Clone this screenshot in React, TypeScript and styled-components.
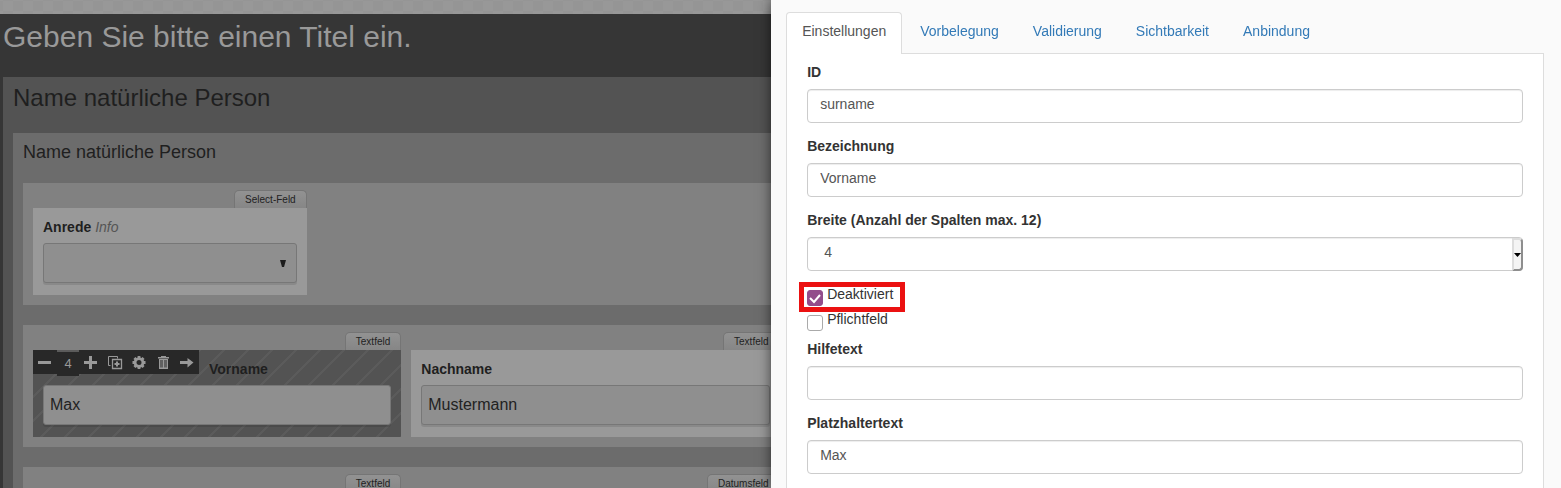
import React from "react";
import styled, { createGlobalStyle } from "styled-components";

const GlobalStyle = createGlobalStyle`
  * { box-sizing: border-box; }
  body { margin: 0; font-family: "Liberation Sans", Arial, sans-serif; font-size: 14px; line-height: 20px; color: #333; }
  button, input, select { font-family: inherit; }
`;

const Shell = styled.div`
  height: 100vh;
  overflow: hidden;
  background: #363636;
`;

const TopStrip = styled.div`
  height: 14px;
  background: repeating-conic-gradient(#959595 0 25%, #989898 0 50%) 3px 1px / 20px 20px;
`;

const TitleBar = styled.header`
  height: 63px;
  padding: 3px;
`;

const Title = styled.h1`
  margin: 0;
  font-size: 30px;
  line-height: 40px;
  font-weight: 400;
  color: #999;
`;

const Form = styled.main`
  width: 75.9%;
  margin-left: 3px;
  padding: 0 10px 10px;
  background: #535353;
`;

const SectionTitle = styled.h2`
  margin: 0;
  padding: 6px 0 20px;
  font-size: 24px;
  line-height: 30px;
  font-weight: 400;
  color: #1f1f1f;
`;

const Group = styled.section`
  padding: 0 10px 10px;
  background: #6c6c6c;
`;

const GroupTitle = styled.h3`
  margin: 0;
  padding: 9px 0 21px;
  font-size: 18px;
  line-height: 20px;
  font-weight: 400;
  color: #1f1f1f;
`;

const Row = styled.div`
  display: grid;
  grid-template-columns: repeat(12, minmax(0, 1fr));
  column-gap: 10px;
  margin-bottom: 20px;
  padding: 7px 10px 10px;
  background: #818181;
`;

const Cell = styled.div<{ $span: number }>`
  grid-column: span ${(p) => p.$span};
  display: flex;
  flex-direction: column;
`;

const TypeTag = styled.span`
  align-self: flex-end;
  height: 18px;
  padding: 0 10px;
  border: 1px solid #757575;
  border-bottom: 0;
  border-radius: 5px 5px 0 0;
  background: linear-gradient(#929292, #868686);
  font-size: 10px;
  line-height: 18px;
  color: #222;
`;

const Card = styled.div<{ $selected?: boolean }>`
  position: relative;
  height: 87px;
  padding: 10px;
  background: ${(p) =>
    p.$selected
      ? "repeating-linear-gradient(135deg, #535353 0 15px, #5b5b5b 15px 17px)"
      : "#999"};
`;

const CardLabel = styled.label<{ $shifted?: boolean }>`
  display: block;
  height: 25px;
  padding-left: ${(p) => (p.$shifted ? "166px" : "0")};
  line-height: 18px;
  font-weight: 700;
  color: #1f1f1f;
`;

const Info = styled.em`
  font-weight: 400;
  color: #555;
`;

const CardInput = styled.input`
  display: block;
  width: 100%;
  height: 40px;
  padding: 0 6px;
  border: 1px solid #777;
  border-radius: 3px;
  background: #8f8f8f;
  box-shadow: 0 2px 0 rgba(0, 0, 0, 0.1);
  font-size: 16px;
  color: #222;
`;

const CardSelectBox = styled.div`
  position: relative;
`;

const CardSelect = styled(CardInput).attrs({ as: "select" })`
  appearance: none;
`;

const Caret = styled.svg`
  position: absolute;
  right: 10px;
  top: 17px;
  pointer-events: none;
`;

const Toolbar = styled.div`
  position: absolute;
  left: 0;
  top: 0;
  display: flex;
  height: 24px;
  background: #282828;
`;

const Tool = styled.button`
  display: flex;
  align-items: center;
  justify-content: center;
  width: 24px;
  height: 24px;
  padding: 0;
  border: 0;
  background: none;
  color: #999;
`;

const Count = styled.span`
  width: 22px;
  height: 26px;
  border-top: 2px solid #5b5b5b;
  background: #282828;
  font-size: 13px;
  line-height: 24px;
  text-align: center;
  color: #999;
`;

const Drawer = styled.aside`
  position: fixed;
  top: 0;
  right: 0;
  bottom: 0;
  width: 50.6%;
  display: flex;
  flex-direction: column;
  padding: 12px 17px 0 15px;
  overflow: hidden;
  background: #fafafa;
  box-shadow: 0 0 12px rgba(0, 0, 0, 0.6);
`;

const Tabs = styled.nav`
  display: flex;
  gap: 2px;
`;

const Tab = styled.a<{ $active?: boolean }>`
  position: relative;
  height: 42px;
  margin-bottom: -1px;
  padding: 8px 15px;
  border: 1px solid ${(p) => (p.$active ? "#ddd" : "transparent")};
  border-bottom: 0;
  border-radius: 4px 4px 0 0;
  background: ${(p) => (p.$active ? "#fff" : "transparent")};
  color: ${(p) => (p.$active ? "#555" : "#337ab7")};
  text-decoration: none;
`;

const Panel = styled.form`
  flex: 1;
  padding: 8px 20px;
  border: 1px solid #ddd;
  border-bottom: 0;
  background: #fff;
`;

const Field = styled.div`
  margin-bottom: 13px;
`;

const FieldLabel = styled.label`
  display: block;
  margin-bottom: 7px;
  font-weight: 700;
`;

const FieldInput = styled.input`
  display: block;
  width: 100%;
  height: 34px;
  padding: 4px 12px 8px;
  border: 1px solid #ccc;
  border-radius: 4px;
  background: #fff;
  box-shadow: inset 0 1px 1px rgba(0, 0, 0, 0.075);
  font-size: 14px;
  line-height: 20px;
  color: #555;
`;

const SelectBox = styled.div`
  position: relative;
`;

const FieldSelect = styled(FieldInput).attrs({ as: "select" })`
  appearance: none;
  padding-left: 16px;
`;

const SelectHandle = styled.span`
  position: absolute;
  top: 1px;
  right: 0;
  bottom: 0;
  display: flex;
  align-items: center;
  width: 11px;
  border: 2px solid #ddd;
  border-right-color: #8e8e8e;
  border-bottom-color: #8e8e8e;
  border-radius: 0 4px 4px 0;
  background: #f4f4f4;
  pointer-events: none;
`;

const Checks = styled.div`
  display: flex;
  flex-direction: column;
  align-items: flex-start;
  gap: 5px;
  margin-bottom: 10px;
`;

const Check = styled.label<{ $marked?: boolean }>`
  position: relative;
  display: flex;
  gap: 4px;
  height: 20px;

  &::after {
    content: ${(p) => (p.$marked ? '""' : "none")};
    position: absolute;
    inset: -2px -12px -8px -8px;
    border: 5px solid #eb1111;
  }
`;

const Tick = styled.input`
  appearance: none;
  width: 16px;
  height: 16px;
  margin: 6px 0 0;
  border: 1px solid #aaa;
  border-radius: 3px;
  background: #fff;

  &:checked {
    border-color: #924d8b;
    background: #924d8b;
  }
`;

const TickMark = styled.svg`
  position: absolute;
  left: 0;
  top: 6px;
  pointer-events: none;
`;

const tools = {
  minus: <path d="M1 7h13v3H1z" />,
  plus: <path d="M6 2h3v5h5v3H9v5H6v-5H1V7h5z" />,
  copy: (
    <>
      <path d="M3.500 11.500h-2v-9h9v2" fill="none" stroke="currentColor" />
      <path d="M5.500 5.500h9v9h-9z" fill="none" stroke="currentColor" strokeWidth="1.300" />
      <path d="M9 7.500h2V9h1.500v2H11v1.500H9V11H7.500V9H9z" />
    </>
  ),
  gear: (
    <>
      <circle cx="8" cy="8.500" r="3.900" fill="none" stroke="currentColor" strokeWidth="2.800" />
      <path
        d="M8 2v2.500M8 12.500V15M1.500 8.500H4M12 8.500h2.500M3.400 3.900l1.700 1.700M10.900 11.400l1.700 1.700M12.600 3.900l-1.700 1.700M5.100 11.400l-1.700 1.700"
        stroke="currentColor"
        strokeWidth="2.800"
      />
    </>
  ),
  trash: (
    <>
      <path d="M6 2h5v1h3v1.500H3V3h3z" />
      <path d="M4 5h9v10H4zM5.500 6v7.500h1V6zM7.500 6v7.500H8V6zM9 6v7.500h.5V6zM10.500 6v7.500h1V6z" fillRule="evenodd" />
    </>
  ),
  arrow: <path d="M1 7h7.500V4L14.500 8.500l-6 5V10H1z" />,
};

function ToolButton({ name, label }: { name: keyof typeof tools; label: string }) {
  return (
    <Tool type="button" aria-label={label}>
      <svg width="16" height="16" viewBox="0 0 16 16" fill="currentColor">
        {tools[name]}
      </svg>
    </Tool>
  );
}

function TextField({ id, label, value }: { id: string; label: string; value: string }) {
  return (
    <Field>
      <FieldLabel htmlFor={id}>{label}</FieldLabel>
      <FieldInput id={id} defaultValue={value} />
    </Field>
  );
}

const tabs = ["Einstellungen", "Vorbelegung", "Validierung", "Sichtbarkeit", "Anbindung"];

export default function App() {
  return (
    <>
      <GlobalStyle />
      <Shell>
        <TopStrip />
        <TitleBar>
          <Title>Geben Sie bitte einen Titel ein.</Title>
        </TitleBar>
        <Form>
          <SectionTitle>Name natürliche Person</SectionTitle>
          <Group>
            <GroupTitle>Name natürliche Person</GroupTitle>
            <Row>
              <Cell $span={3}>
                <TypeTag>Select-Feld</TypeTag>
                <Card>
                  <CardLabel htmlFor="anrede">
                    Anrede <Info>Info</Info>
                  </CardLabel>
                  <CardSelectBox>
                    <CardSelect id="anrede" />
                    <Caret width="8" height="8" viewBox="0 0 8 8">
                      <path d="M1 0h6L5 7H3z" fill="#1c1c1c" />
                    </Caret>
                  </CardSelectBox>
                </Card>
              </Cell>
            </Row>
            <Row>
              <Cell $span={4}>
                <TypeTag>Textfeld</TypeTag>
                <Card $selected>
                  <Toolbar>
                    <ToolButton name="minus" label="Schmaler" />
                    <Count>4</Count>
                    <ToolButton name="plus" label="Breiter" />
                    <ToolButton name="copy" label="Duplizieren" />
                    <ToolButton name="gear" label="Bearbeiten" />
                    <ToolButton name="trash" label="Löschen" />
                    <ToolButton name="arrow" label="Verschieben" />
                  </Toolbar>
                  <CardLabel $shifted htmlFor="vorname">
                    Vorname
                  </CardLabel>
                  <CardInput id="vorname" defaultValue="Max" />
                </Card>
              </Cell>
              <Cell $span={4}>
                <TypeTag>Textfeld</TypeTag>
                <Card>
                  <CardLabel htmlFor="nachname">Nachname</CardLabel>
                  <CardInput id="nachname" defaultValue="Mustermann" />
                </Card>
              </Cell>
            </Row>
            <Row>
              <Cell $span={4}>
                <TypeTag>Textfeld</TypeTag>
                <Card />
              </Cell>
              <Cell $span={4}>
                <TypeTag>Datumsfeld</TypeTag>
                <Card />
              </Cell>
            </Row>
          </Group>
        </Form>
      </Shell>
      <Drawer>
        <Tabs>
          {tabs.map((t, i) => (
            <Tab key={t} href="#" $active={i === 0}>
              {t}
            </Tab>
          ))}
        </Tabs>
        <Panel>
          <TextField id="field-id" label="ID" value="surname" />
          <TextField id="field-name" label="Bezeichnung" value="Vorname" />
          <Field>
            <FieldLabel htmlFor="field-width">Breite (Anzahl der Spalten max. 12)</FieldLabel>
            <SelectBox>
              <FieldSelect id="field-width">
                <option>4</option>
              </FieldSelect>
              <SelectHandle>
                <svg width="7" height="4" viewBox="0 0 7 4">
                  <path d="M0 0h7L3.500 4z" fill="#000" />
                </svg>
              </SelectHandle>
            </SelectBox>
          </Field>
          <Checks>
            <Check $marked>
              <Tick type="checkbox" defaultChecked />
              <TickMark width="16" height="16" viewBox="0 0 16 16">
                <path d="M3 8l4 4 6-7" fill="none" stroke="#fff" strokeWidth="2" />
              </TickMark>
              Deaktiviert
            </Check>
            <Check>
              <Tick type="checkbox" />
              Pflichtfeld
            </Check>
          </Checks>
          <TextField id="field-help" label="Hilfetext" value="" />
          <TextField id="field-placeholder" label="Platzhaltertext" value="Max" />
        </Panel>
      </Drawer>
    </>
  );
}
